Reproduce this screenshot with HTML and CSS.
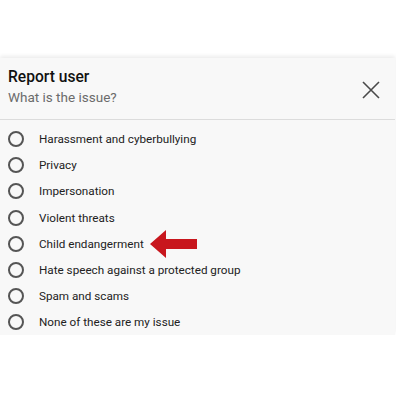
FILE: index.html
```html
<!DOCTYPE html>
<html lang="en">
  <head>
    <meta charset="UTF-8" />
    <title>Report user</title>
    <link rel="stylesheet" href="styles.css">
  </head>
  <body>
    <div class="sheet">
      <header class="sheet-head">
        <div class="titles">
          <h1>Report user</h1>
          <p>What is the issue?</p>
        </div>
        <svg class="close" width="20" height="20" viewBox="0 0 20 20">
          <path d="M2 2 L18 18 M18 2 L2 18" stroke="#4a4a4a" stroke-width="1.6" fill="none" />
        </svg>
      </header>
      <ul class="options">
        <li><span class="radio"></span>Harassment and cyberbullying</li>
        <li><span class="radio"></span>Privacy</li>
        <li><span class="radio"></span>Impersonation</li>
        <li><span class="radio"></span>Violent threats</li>
        <li>
          <span class="radio"></span>Child endangerment
          <svg class="arrow" width="47" height="28" viewBox="0 0 47 28">
            <path d="M0 14 L16 0 L16 9 L47 9 L47 19 L16 19 L16 28 Z" fill="#c8161d" />
          </svg>
        </li>
        <li><span class="radio"></span>Hate speech against a protected group</li>
        <li><span class="radio"></span>Spam and scams</li>
        <li><span class="radio"></span>None of these are my issue</li>
      </ul>
    </div>
  </body>
</html>
```

FILE: styles.css
```css
body {
  margin: 0;
  background: #fff;
  font-family: Roboto, "Liberation Sans", sans-serif;
}

.sheet {
  margin-top: 58px;
  width: 395px;
  height: 277px;
  background: #f8f8f8;
  box-shadow: 0 -2px 4px rgba(0, 0, 0, 0.08);
}

.sheet-head {
  display: flex;
  justify-content: space-between;
  align-items: center;
  height: 62px;
  padding: 0 14px 0 8px;
  border-bottom: 1px solid #dcdcdc;
  box-sizing: border-box;
}

.titles {
  margin-bottom: 5px;
}

.titles h1 {
  margin: 0;
  font-size: 15.6px;
  font-weight: 500;
  color: #111;
  line-height: 20px;
}

.titles p {
  margin: 1px 0 0;
  font-size: 13.5px;
  color: #6b6b6b;
  line-height: 18px;
}

.close {
  margin-top: 2px;
}

.options {
  list-style: none;
  margin: 0;
  padding: 6px 0 0 8px;
}

.options li {
  display: flex;
  align-items: center;
  height: 26.2px;
  font-size: 11.7px;
  color: #222;
}

.radio {
  width: 12px;
  height: 12px;
  border: 2px solid #555;
  border-radius: 50%;
  margin-right: 15px;
}

.arrow {
  margin-left: 6px;
}
```
